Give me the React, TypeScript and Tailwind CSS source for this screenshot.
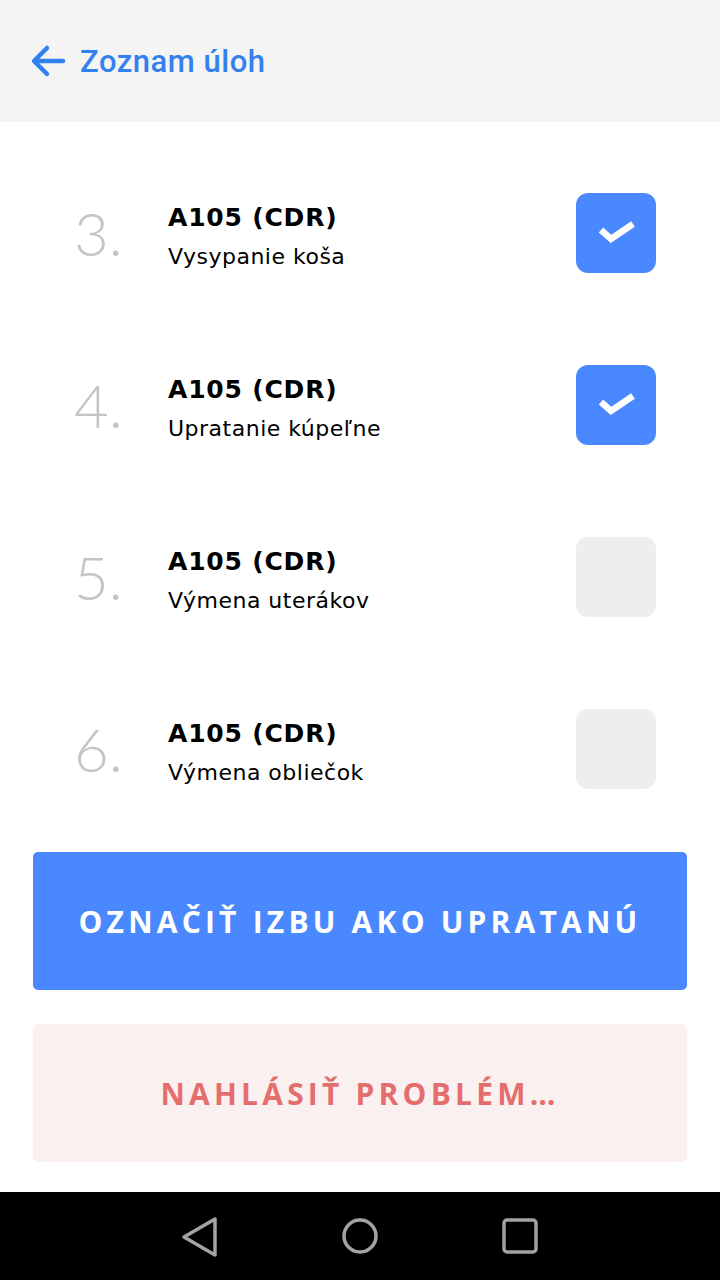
import React from 'react';

type Uloha = { cislo: number; izba: string; nazov: string; hotovo: boolean };

const ulohy: Uloha[] = [
  { cislo: 3, izba: 'A105 (CDR)', nazov: 'Vysypanie koša', hotovo: true },
  { cislo: 4, izba: 'A105 (CDR)', nazov: 'Upratanie kúpeľne', hotovo: true },
  { cislo: 5, izba: 'A105 (CDR)', nazov: 'Výmena uterákov', hotovo: false },
  { cislo: 6, izba: 'A105 (CDR)', nazov: 'Výmena obliečok', hotovo: false },
];

function Checkbox({ checked }: { checked: boolean }) {
  return (
    <div
      className={`w-[80px] h-[80px] rounded-[12px] flex items-center justify-center shrink-0 ${
        checked ? 'bg-[#4a88ff]' : 'bg-[#eeeeee]'
      }`}
    >
      {checked && (
        <svg width="80" height="80" viewBox="0 0 80 80">
          <path d="M25 37 L35 46 L57 31" fill="none" stroke="white" strokeWidth="6.5" strokeLinejoin="miter" />
        </svg>
      )}
    </div>
  );
}

export default function App() {
  return (
    <div className="h-[1280px] flex flex-col bg-white" style={{ fontFamily: '"DejaVu Sans", sans-serif' }}>
      {/* Header */}
      <div className="h-[122px] bg-[#f4f4f4] flex items-center pl-[30px] shrink-0">
        <svg width="38" height="34" viewBox="0 0 38 34" className="mr-[12px]">
          <path d="M33 17 H5 M17 4 L4 17 L17 30" fill="none" stroke="#3381ee" strokeWidth="4.5" strokeLinecap="round" strokeLinejoin="round" />
        </svg>
        <span
          className="text-[31px] font-medium text-[#3381ee] tracking-[0.5px] pt-[2px]"
          style={{ fontFamily: 'Roboto, sans-serif' }}
        >
          Zoznam úloh
        </span>
      </div>

      {/* Zoznam */}
      <div className="flex-1 flex flex-col pt-[25px]">
        {ulohy.map(u => (
          <div key={u.cislo} className="h-[172px] flex items-center pl-[74px] pr-[64px]">
            <div
              className="w-[94px] text-[60px] font-light text-[#c4c4c4] leading-none"
              style={{ fontFamily: 'Lato, sans-serif' }}
            >
              {u.cislo}.
            </div>
            <div className="flex-1 h-[80px] flex flex-col pt-[9px]">
              <span className="text-[25px] font-bold text-black leading-[32px] tracking-[0.8px]">{u.izba}</span>
              <span className="text-[22px] text-black leading-[30px] mt-[8px] tracking-[0.5px]">{u.nazov}</span>
            </div>
            <Checkbox checked={u.hotovo} />
          </div>
        ))}

        <div className="px-[33px] pt-[17px] flex flex-col gap-[34px]" style={{ fontFamily: '"Open Sans", sans-serif' }}>
          <button className="h-[138px] w-full rounded-[5px] bg-[#4a88ff] text-white text-[30px] font-bold tracking-[4.2px]">
            OZNAČIŤ IZBU AKO UPRATANÚ
          </button>
          <button className="h-[138px] w-full rounded-[5px] bg-[#fbf0f0] text-[#e46e6e] text-[30px] font-bold tracking-[4.2px]">
            NAHLÁSIŤ PROBLÉM…
          </button>
        </div>
      </div>

      {/* Navigacia */}
      <div className="h-[88px] bg-black flex items-center justify-center gap-[110px] shrink-0">
        <svg width="50" height="50" viewBox="0 0 50 50">
          <path d="M40 8 L40 44 L9 26 Z" fill="none" stroke="#a3a3a3" strokeWidth="3.5" strokeLinejoin="round" />
        </svg>
        <svg width="50" height="50" viewBox="0 0 50 50">
          <circle cx="25" cy="25" r="16" fill="none" stroke="#a3a3a3" strokeWidth="3.5" />
        </svg>
        <svg width="50" height="50" viewBox="0 0 50 50">
          <rect x="9" y="9" width="32" height="32" rx="3" fill="none" stroke="#a3a3a3" strokeWidth="3.5" />
        </svg>
      </div>
    </div>
  );
}
